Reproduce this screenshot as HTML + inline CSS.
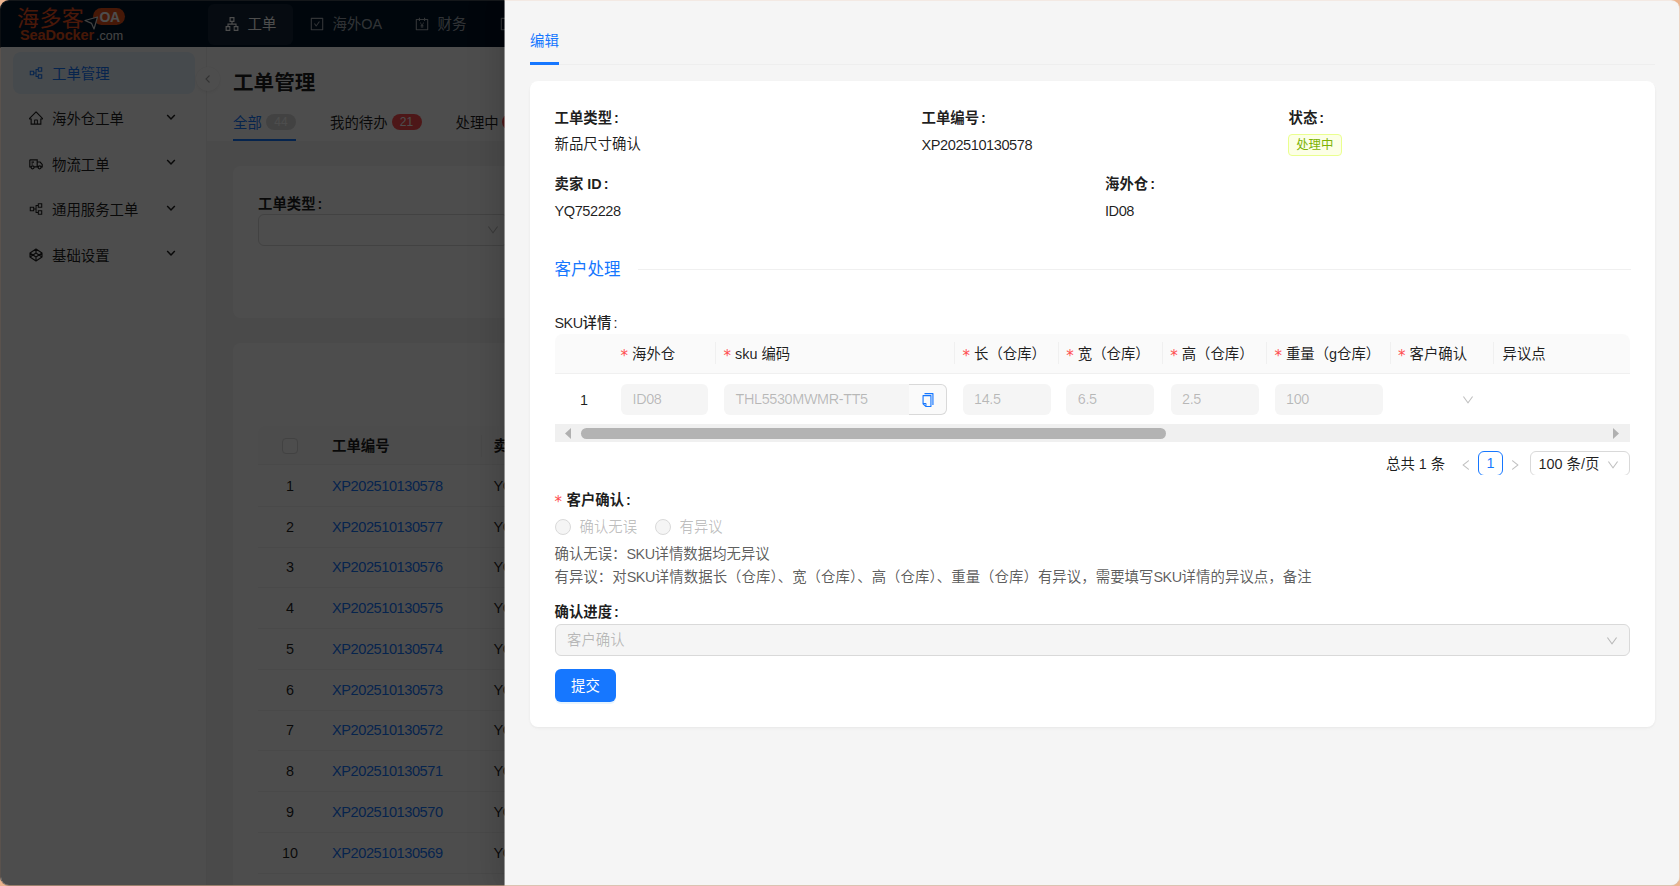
<!DOCTYPE html>
<html lang="zh-CN">
<head>
<meta charset="utf-8">
<title>工单管理</title>
<style>
*{box-sizing:border-box;margin:0;padding:0}
html,body{width:1680px;height:886px;overflow:hidden}
body{background:#ebb48f;font-family:"Liberation Sans","Noto Sans CJK SC",sans-serif;font-size:14.4px;color:rgba(0,0,0,.88);position:relative}
.l{font-size:14.6px;letter-spacing:-.45px}
.a{position:absolute}
.t{position:absolute;white-space:nowrap;line-height:22px;height:22px}
.b{font-weight:700}
svg{display:block}
/* window frame */
#edge{position:absolute;left:0;top:0;width:1680px;height:886px;border-radius:9px;
 background:
 linear-gradient(90deg,#14171a 0,#14171a 504px,#f3e9e3 505px,#f3e9e3 100%) 0 0/100% 5px no-repeat,
 linear-gradient(90deg,#9b806c 0,#9b806c 504px,#dcc3b1 505px,#dcc3b1 100%) 0 100%/100% 5px no-repeat,
 linear-gradient(180deg,#0c0f12 0,#0c0f12 47px,#5a524d 48px,#5a524d 100%) 0 0/5px 100% no-repeat,
 #ecd3c2}
#win{position:absolute;left:1px;top:1px;width:1678px;height:884px;border-radius:8px;overflow:hidden;background:linear-gradient(90deg,#4d4d4d 0,#4d4d4d 504px,#f5f5f5 505px,#f5f5f5 100%)}
#stage{position:absolute;left:-1px;top:-1px;width:1680px;height:886px}
/* ---------- underlay app ---------- */
#hdr{left:1px;top:1px;width:1678px;height:46px;background:#001529}
#sider{left:1px;top:47px;width:206px;height:839px;background:#fff;border-right:1px solid rgba(5,5,5,.06)}
#main{left:207px;top:47px;width:1473px;height:839px;background:#f5f5f5}
#phead{left:207px;top:47px;width:1473px;height:94px;background:#fff}
.nav{position:absolute;top:3px;height:41px;border-radius:6px;color:rgba(255,255,255,.65)}
.nav.on{background:rgba(255,255,255,.08);color:#fff}
.nav svg{position:absolute;left:16.500px;top:13px;width:14px;height:14px;fill:currentColor}
.nav span{position:absolute;left:39.500px;top:9px;line-height:22px;white-space:nowrap}
.mi{position:absolute;left:13px;width:182px;height:41.6px;border-radius:8px;color:rgba(0,0,0,.88)}
.mi.on{background:#e6f4ff;color:#1677ff}
.mi svg.ic{position:absolute;left:16px;top:13.5px;width:14px;height:14px;fill:currentColor}
.mi span{position:absolute;left:39px;top:10.5px;line-height:22px;white-space:nowrap}
.mi svg.ar{position:absolute;left:152.5px;top:14px;width:10px;height:10px;fill:none;stroke:currentColor;stroke-width:1.5}
.card{position:absolute;background:#fff;border-radius:8px}
.bdg{position:absolute;height:16px;border-radius:8px;color:#fff;font-size:12px;line-height:16px;text-align:center;width:30px}
.th{position:absolute;background:#fafafa}
.row{position:absolute;left:258px;width:260px;height:40.75px;border-bottom:1px solid #f0f0f0}
.row i{position:absolute;left:0;width:64px;text-align:center;font-style:normal;line-height:22px;top:8.7px}
.row u{font-size:14.6px;letter-spacing:-.45px;position:absolute;left:74px;text-decoration:none;color:#1677ff;line-height:22px;top:8.7px}
.row b{font-size:14.6px;letter-spacing:-.45px;position:absolute;left:235.5px;font-weight:400;line-height:22px;top:8.7px}
#mask{left:1px;top:1px;width:1678px;height:884px;background:rgba(0,0,0,.6975)}
/* ---------- drawer ---------- */
#drawer{left:505px;top:1px;width:1175px;height:884px;background:#f5f5f5;box-shadow:-6px 0 16px 0 rgba(0,0,0,.08),-3px 0 6px -4px rgba(0,0,0,.12),-9px 0 28px 8px rgba(0,0,0,.05)}

.lb{position:absolute;white-space:nowrap;line-height:22px;height:22px;font-weight:700;color:rgba(0,0,0,.88)}
.lb:after{content:":";margin-left:2px;font-weight:700}
.v{position:absolute;white-space:nowrap;line-height:22px;height:22px;color:rgba(0,0,0,.88)}
.hc{position:absolute;top:342.500px;white-space:nowrap;line-height:22px;height:22px;color:rgba(0,0,0,.88)}
.hc em{font-style:normal;color:#ff4d4f;font-family:"DejaVu Sans","Liberation Sans",sans-serif;font-size:15px;margin-right:4px;display:inline-block;width:7.5px;position:relative;top:2px}
.sep{position:absolute;top:342px;width:1px;height:22px;background:#f0f0f0}
.inp{font-size:14.4px;letter-spacing:-.35px;position:absolute;top:384px;height:31px;border-radius:6px;background:#f5f5f5;color:rgba(0,0,0,.25);line-height:31px;padding-left:11.500px;white-space:nowrap}
.dis{color:rgba(0,0,0,.25)}
</style>
</head>
<body>
<div id="edge"></div>
<div id="win"><div id="stage">

<!-- ================= underlay ================= -->
<div id="under" class="a" style="left:0;top:0;width:505px;height:886px;overflow:hidden">
<div id="hdr" class="a">
  <!-- logo -->
  <div class="a" id="logo" style="left:18px;top:6px;width:108px;height:36px">
    <div class="t" style="left:-2px;top:-1.500px;font-size:22px;line-height:26px;height:26px;color:#f4511e;letter-spacing:.4px">海多客</div>
    <div class="a" style="left:74px;top:1px;width:32px;height:17px;border-radius:9px;background:#e8501a"></div>
    <div class="t b" style="left:80.500px;top:.5px;font-size:14px;line-height:18px;color:#fff;letter-spacing:-.5px">OA</div>
    <svg class="a" style="left:65px;top:9px" width="15" height="14" viewBox="0 0 15 14"><path d="M1 4.5 13.5 1 10 13 7.6 7.4Z" fill="#001529" stroke="#d9d9d9" stroke-width="1.2" stroke-linejoin="round"/></svg>
    <div class="t b" style="left:1px;top:20px;font-size:14.5px;line-height:16px;height:16px;color:#e8501a;letter-spacing:-.1px">SeaDocker</div>
    <div class="t" style="left:77px;top:21px;font-size:12.5px;line-height:16px;height:16px;color:#e0e0e0">.com</div>
  </div>
  <!-- nav -->
  <div class="nav on" style="left:207px;width:85px"><svg viewBox="64 64 896 896"><path d="M908 640H804V488c0-4.400-3.600-8-8-8H548v-96h108c8.800 0 16-7.200 16-16V80c0-8.800-7.200-16-16-16H368c-8.800 0-16 7.200-16 16v288c0 8.800 7.200 16 16 16h108v96H228c-4.400 0-8 3.600-8 8v152H116c-8.800 0-16 7.200-16 16v288c0 8.800 7.200 16 16 16h272c8.800 0 16-7.200 16-16V656c0-8.800-7.200-16-16-16H292v-88h440v88H636c-8.800 0-16 7.200-16 16v288c0 8.800 7.200 16 16 16h272c8.800 0 16-7.200 16-16V656c0-8.800-7.200-16-16-16zm-564 76v168H176V716h168zm84-408V140h168v168H428zm420 576H680V716h168v168z"/></svg><span>工单</span></div>
  <div class="nav" style="left:292px;width:105px"><svg viewBox="64 64 896 896"><path d="M433.100 657.700a31.800 31.800 0 0051.700 0l210.600-292c3.800-5.300 0-12.700-6.500-12.700H642c-10.200 0-19.900 4.900-25.900 13.300L459 584.300l-71.200-98.800c-6-8.300-15.600-13.300-25.900-13.300H315c-6.500 0-10.300 7.400-6.500 12.700l124.600 172.800z"/><path d="M880 112H144c-17.700 0-32 14.300-32 32v736c0 17.700 14.300 32 32 32h736c17.700 0 32-14.300 32-32V144c0-17.700-14.300-32-32-32zm-40 728H184V184h656v656z"/></svg><span>海外OA</span></div>
  <div class="nav" style="left:397px;width:85px"><svg viewBox="64 64 896 896"><path d="M880 184H712v-64c0-4.400-3.600-8-8-8h-56c-4.400 0-8 3.600-8 8v64H384v-64c0-4.400-3.600-8-8-8h-56c-4.400 0-8 3.600-8 8v64H144c-17.700 0-32 14.300-32 32v664c0 17.700 14.300 32 32 32h736c17.700 0 32-14.300 32-32V216c0-17.700-14.300-32-32-32zm-40 656H184V256h128v48c0 4.400 3.600 8 8 8h56c4.400 0 8-3.600 8-8v-48h256v48c0 4.400 3.600 8 8 8h56c4.400 0 8-3.600 8-8v-48h128v584z"/><path d="M640 420h-50l-78 150-78-150h-52l95 170h-55v44h70v36h-70v44h70v60h44v-60h70v-44h-70v-36h70v-44h-55z"/></svg><span>财务</span></div>
  <div class="nav" style="left:482px;width:85px"><svg viewBox="64 64 896 896"><path d="M880 112H144c-17.700 0-32 14.300-32 32v736c0 17.700 14.300 32 32 32h736c17.700 0 32-14.300 32-32V144c0-17.700-14.300-32-32-32zm-40 728H184V184h656v656z"/></svg><span>基础</span></div>
</div>

<div id="sider" class="a"></div>
<div id="main" class="a"></div>
<div id="phead" class="a"></div>
<div class="mi on" style="top:52px"><svg class="ic" viewBox="64 64 896 896"><path d="M640.600 429.800h257.100c7.900 0 14.300-6.400 14.300-14.300V158.300c0-7.900-6.400-14.300-14.300-14.300H640.600c-7.900 0-14.300 6.400-14.300 14.300v92.900H490.600c-3.900 0-7.100 3.200-7.100 7.100v221.500h-85.700v-96.500c0-7.900-6.400-14.300-14.300-14.300H126.300c-7.900 0-14.300 6.400-14.300 14.300v257.200c0 7.900 6.400 14.300 14.300 14.300h257.100c7.900 0 14.300-6.400 14.300-14.300V544h85.700v221.500c0 3.900 3.200 7.100 7.100 7.100h135.700v92.900c0 7.900 6.400 14.300 14.300 14.300h257.100c7.900 0 14.300-6.400 14.300-14.300v-257.200c0-7.900-6.400-14.300-14.300-14.300h-257c-7.900 0-14.300 6.400-14.300 14.300v100h-78.600v-393h78.600v100c0 7.900 6.400 14.300 14.300 14.300zm53.500-217.900h150V362h-150V211.900zM329.900 587h-150V437h150v150zm364.200 75.100h150v150.100h-150V662.100z"/></svg><span>工单管理</span></div>
<div class="mi" style="top:97.6px"><svg class="ic" viewBox="64 64 896 896"><path d="M946.500 505L560.100 118.800l-25.900-25.900a31.500 31.500 0 00-44.400 0L77.500 505a63.900 63.900 0 00-18.800 46c.4 35.200 29.700 63.300 64.900 63.300h42.500V940h691.800V614.300h43.400c17.100 0 33.200-6.700 45.300-18.800a63.600 63.600 0 0018.700-45.300c0-17-6.700-33.100-18.800-45.200zM568 868H456V664h112v204zm217.900-325.700V868H632V640c0-22.100-17.900-40-40-40H432c-22.100 0-40 17.900-40 40v228H238.100V542.300h-96l370-369.700 23.100 23.100L882 542.300h-96.100z"/></svg><span>海外仓工单</span><svg class="ar" viewBox="0 0 10 10"><path d="M1.200 3 5 7l3.800-4"/></svg></div>
<div class="mi" style="top:143.2px"><svg class="ic" viewBox="0 0 14 14" style="fill:none;stroke:currentColor;stroke-width:1.200"><path d="M.8 2.800h7.400v7H5.200M.8 2.800v7h1.100M8.200 5h2.900l2.100 2.400v2.400h-1.300M8.200 9.800h1.300"/><circle cx="3.600" cy="10.300" r="1.500"/><circle cx="10.600" cy="10.300" r="1.500"/><path d="M2.500 5.200h2.500M2.500 7h1.500"/></svg><span>物流工单</span><svg class="ar" viewBox="0 0 10 10"><path d="M1.200 3 5 7l3.800-4"/></svg></div>
<div class="mi" style="top:188.8px"><svg class="ic" viewBox="64 64 896 896"><path d="M640.600 429.800h257.100c7.900 0 14.300-6.400 14.300-14.300V158.300c0-7.900-6.400-14.300-14.300-14.300H640.600c-7.900 0-14.300 6.400-14.300 14.300v92.900H490.600c-3.900 0-7.100 3.200-7.100 7.100v221.500h-85.700v-96.500c0-7.900-6.400-14.300-14.300-14.300H126.300c-7.900 0-14.300 6.400-14.300 14.300v257.200c0 7.900 6.400 14.300 14.300 14.300h257.100c7.900 0 14.300-6.400 14.300-14.300V544h85.700v221.500c0 3.900 3.200 7.100 7.100 7.100h135.700v92.900c0 7.900 6.400 14.300 14.300 14.300h257.100c7.900 0 14.300-6.400 14.300-14.300v-257.200c0-7.900-6.400-14.300-14.300-14.300h-257c-7.900 0-14.300 6.400-14.300 14.300v100h-78.600v-393h78.600v100c0 7.900 6.400 14.300 14.300 14.300zm53.500-217.900h150V362h-150V211.900zM329.900 587h-150V437h150v150zm364.200 75.100h150v150.100h-150V662.100z"/></svg><span>通用服务工单</span><svg class="ar" viewBox="0 0 10 10"><path d="M1.200 3 5 7l3.800-4"/></svg></div>
<div class="mi" style="top:234.4px"><svg class="ic" viewBox="0 0 14 14" style="fill:none;stroke:currentColor;stroke-width:1.150;stroke-linejoin:round"><path d="M7 1 13 5v4l-6 4-6-4V5zM7 1v4M7 13V9M1 5l6 4 6-4M1 9l6-4 6 4"/></svg><span>基础设置</span><svg class="ar" viewBox="0 0 10 10"><path d="M1.200 3 5 7l3.800-4"/></svg></div>
<div class="a" style="left:196px;top:67px;width:24px;height:24px;border-radius:12px;background:#fff;box-shadow:0 2px 8px -2px rgba(0,0,0,.05),0 1px 4px -1px rgba(25,15,15,.07),0 0 1px 0 rgba(0,0,0,.08)"><svg style="position:absolute;left:7px;top:7px" width="10" height="10" viewBox="0 0 10 10"><path d="M6.500 1.500 3 5l3.500 3.500" fill="none" stroke="rgba(0,0,0,.35)" stroke-width="1.100"/></svg></div>

<div class="t b" style="left:233px;top:67px;font-size:20.6px;line-height:32px;height:32px">工单管理</div>
<div class="t" style="left:233px;top:111.500px;color:#1677ff">全部</div>
<div class="bdg" style="left:266px;top:114px;background:rgba(0,0,0,.15)">44</div>
<div class="a" style="left:233px;top:139px;width:63px;height:2px;background:#1677ff"></div>
<div class="t" style="left:330px;top:111.500px">我的待办</div>
<div class="bdg" style="left:391.500px;top:114px;background:#ff4d4f">21</div>
<div class="t" style="left:455.500px;top:111.500px">处理中</div>
<div class="bdg" style="left:502px;top:114px;background:#ff4d4f">21</div>
<div class="card" style="left:233px;top:166px;width:1430px;height:152px"></div>
<div class="t b" style="left:258px;top:192.500px">工单类型<span style="margin:0 8px 0 2px">:</span></div>
<div class="a" style="left:258px;top:214px;width:250px;height:32px;border:1px solid #d9d9d9;border-radius:6px;background:#fff"></div>
<svg class="a" style="left:487px;top:224px" width="12" height="12" viewBox="64 64 896 896" fill="rgba(0,0,0,.25)"><path d="M884 256h-75c-5.100 0-9.900 2.500-12.900 6.600L512 654.200 227.900 262.600c-3-4.100-7.800-6.600-12.900-6.600h-75c-6.500 0-10.300 7.400-6.500 12.700l352.600 486.100c12.800 17.600 39 17.600 51.700 0l352.600-486.100c3.900-5.300.1-12.700-6.400-12.700z"/></svg>
<div class="card" style="left:233px;top:342.500px;width:1430px;height:560px"></div>
<div class="th" style="left:258px;top:426px;width:260px;height:39px;border-radius:8px 0 0 0;border-bottom:1px solid #f0f0f0"></div>
<div class="a" style="left:282px;top:437.500px;width:16px;height:16px;border:1px solid #d9d9d9;border-radius:4px;background:#fff"></div>
<div class="t b" style="left:332px;top:434.500px">工单编号</div>
<div class="a" style="left:481px;top:435px;width:1px;height:22px;background:#f0f0f0"></div>
<div class="t b" style="left:493.500px;top:434.500px">卖家 ID</div>
<div class="row" style="top:466.10px"><i>1</i><u>XP202510130578</u><b>YQ752228</b></div>
<div class="row" style="top:506.85px"><i>2</i><u>XP202510130577</u><b>YQ752228</b></div>
<div class="row" style="top:547.60px"><i>3</i><u>XP202510130576</u><b>YQ752228</b></div>
<div class="row" style="top:588.35px"><i>4</i><u>XP202510130575</u><b>YQ752228</b></div>
<div class="row" style="top:629.10px"><i>5</i><u>XP202510130574</u><b>YQ752228</b></div>
<div class="row" style="top:669.85px"><i>6</i><u>XP202510130573</u><b>YQ752228</b></div>
<div class="row" style="top:710.60px"><i>7</i><u>XP202510130572</u><b>YQ752228</b></div>
<div class="row" style="top:751.35px"><i>8</i><u>XP202510130571</u><b>YQ752228</b></div>
<div class="row" style="top:792.10px"><i>9</i><u>XP202510130570</u><b>YQ752228</b></div>
<div class="row" style="top:832.85px"><i>10</i><u>XP202510130569</u><b>YQ752228</b></div>
<div id="mask" class="a"></div>
</div>
<div id="drawer" class="a"></div>
<div class="a" style="left:504px;top:1px;width:1px;height:884px;background:rgba(245,245,245,.45)"></div>

<!-- ================= drawer content ================= -->
<div class="t" style="left:530px;top:29.500px;color:#1677ff">编辑</div>
<div class="a" style="left:529.500px;top:64px;width:1125.500px;height:1px;background:#eeeeee"></div>
<div class="a" style="left:530px;top:62px;width:28.500px;height:2.500px;background:#1677ff"></div>
<div class="card" style="left:529.500px;top:81px;width:1125.500px;height:646px;box-shadow:0 1px 2px 0 rgba(0,0,0,.03),0 1px 6px -1px rgba(0,0,0,.02),0 2px 4px 0 rgba(0,0,0,.02)"></div>

<div class="lb" style="left:554.500px;top:107px">工单类型</div>
<div class="v" style="left:554.500px;top:133px">新品尺寸确认</div>
<div class="lb" style="left:921.500px;top:107px">工单编号</div>
<div class="v l" style="left:921.500px;top:134px">XP202510130578</div>
<div class="lb" style="left:1288.500px;top:107px">状态</div>
<div class="a" style="left:1288px;top:134px;width:53.500px;height:22px;border:1px solid #eaff8f;border-radius:4px;background:#fcffe6;color:#7cb305;font-size:12.4px;line-height:20px;text-align:center">处理中</div>
<div class="lb" style="left:554.500px;top:173px">卖家 ID</div>
<div class="v l" style="left:554.500px;top:199.500px">YQ752228</div>
<div class="lb" style="left:1105px;top:173px">海外仓</div>
<div class="v l" style="left:1105px;top:200px">ID08</div>

<div class="t" style="left:554.500px;top:256.500px;font-size:16.5px;line-height:24px;height:24px;color:#1677ff">客户处理</div>
<div class="a" style="left:637.500px;top:269px;width:993px;height:1px;background:#f0f0f0"></div>

<div class="t" style="left:554.500px;top:312px;font-weight:500"><span style="letter-spacing:-.5px">SKU</span>详情<span style="margin-left:2px">:</span></div>

<!-- table -->
<div class="a" style="left:555px;top:334px;width:1075px;height:40px;background:#fafafa;border-radius:8px 8px 0 0;border-bottom:1px solid #f0f0f0"></div>
<div class="hc" style="left:620.500px"><em>*</em>海外仓</div>
<div class="hc" style="left:723.500px"><em>*</em>sku 编码</div>
<div class="hc" style="left:962.500px"><em>*</em>长（仓库）</div>
<div class="hc" style="left:1066.300px"><em>*</em>宽（仓库）</div>
<div class="hc" style="left:1170.200px"><em>*</em>高（仓库）</div>
<div class="hc" style="left:1274.400px"><em>*</em>重量（g仓库）</div>
<div class="hc" style="left:1398px"><em>*</em>客户确认</div>
<div class="hc" style="left:1502.500px">异议点</div>
<div class="sep" style="left:715px"></div><div class="sep" style="left:954px"></div><div class="sep" style="left:1058px"></div><div class="sep" style="left:1162px"></div><div class="sep" style="left:1266px"></div><div class="sep" style="left:1390px"></div><div class="sep" style="left:1493px"></div>
<div class="t" style="left:555px;top:388.500px;width:58px;text-align:center">1</div>
<div class="inp" style="left:621px;width:87px">ID08</div>
<div class="inp" style="left:724px;width:185px;border-radius:6px 0 0 6px">THL5530MWMR-TT5</div>
<div class="a" style="left:909px;top:384px;width:38px;height:31px;border:1px solid #d9d9d9;border-left:0;border-radius:0 6px 6px 0;background:#fafafa"></div>
<svg class="a" style="left:920.500px;top:392.500px" width="14" height="14" viewBox="64 64 896 896" fill="#1677ff"><path d="M832 64H296c-4.400 0-8 3.600-8 8v56c0 4.400 3.600 8 8 8h496v688c0 4.400 3.600 8 8 8h56c4.400 0 8-3.600 8-8V96c0-17.700-14.300-32-32-32zM704 192H192c-17.700 0-32 14.300-32 32v530.700c0 8.500 3.400 16.600 9.400 22.600l173.300 173.300c2.200 2.200 4.700 4 7.400 5.500v1.900h4.200c3.500 1.300 7.200 2 11 2H704c17.700 0 32-14.300 32-32V224c0-17.700-14.300-32-32-32zM350 856.200L263.900 770H350v86.200zM664 888H414V746c0-22.100-17.900-40-40-40H232V264h432v624z"/></svg>
<div class="inp" style="left:962.500px;width:88px">14.5</div>
<div class="inp" style="left:1066.300px;width:88px">6.5</div>
<div class="inp" style="left:1170.500px;width:88px">2.5</div>
<div class="inp" style="left:1274.500px;width:108px">100</div>
<svg class="a" style="left:1462px;top:393.500px" width="12" height="12" viewBox="64 64 896 896" fill="rgba(0,0,0,.25)"><path d="M884 256h-75c-5.100 0-9.900 2.500-12.900 6.600L512 654.200 227.900 262.600c-3-4.100-7.800-6.600-12.900-6.600h-75c-6.500 0-10.300 7.400-6.500 12.700l352.600 486.100c12.800 17.600 39 17.600 51.700 0l352.600-486.100c3.900-5.300.1-12.700-6.400-12.700z"/></svg>
<!-- scrollbar -->
<div class="a" style="left:555px;top:424px;width:1075px;height:18px;background:#f0f0f0"></div>
<div class="a" style="left:581px;top:428px;width:585px;height:11px;border-radius:6px;background:#b3b3b3"></div>
<svg class="a" style="left:564px;top:427px" width="8" height="13" viewBox="0 0 8 13"><path d="M1 6.500 7 1v11z" fill="#b0b0b0"/></svg>
<svg class="a" style="left:1612px;top:427px" width="8" height="13" viewBox="0 0 8 13"><path d="M7 6.500 1 1v11z" fill="#b0b0b0"/></svg>
<!-- pagination (clipped) -->
<div class="a" style="left:1370px;top:445px;width:262px;height:29.500px;overflow:hidden">
  <div class="t" style="left:16px;top:8px;line-height:22px">总共 1 条</div>
  <svg class="a" style="left:90px;top:13.500px" width="12" height="12" viewBox="64 64 896 896" fill="rgba(0,0,0,.25)"><path d="M724 218.300V141c0-6.700-7.700-10.400-12.900-6.300L260.300 486.800a31.860 31.860 0 000 50.300l450.800 352.100c5.300 4.100 12.900.4 12.900-6.300v-77.300c0-4.900-2.300-9.600-6.100-12.600l-360-281 360-281.100c3.800-3 6.100-7.700 6.100-12.600z"/></svg>
  <div class="a" style="left:108px;top:6px;width:25px;height:25px;border:1px solid #1677ff;border-radius:6px;background:#fff;color:#1677ff;text-align:center;line-height:22px">1</div>
  <svg class="a" style="left:139px;top:13.500px" width="12" height="12" viewBox="64 64 896 896" fill="rgba(0,0,0,.25)"><path d="M765.700 486.800L314.900 134.700A7.970 7.970 0 00302 141v77.300c0 4.900 2.300 9.600 6.100 12.600l360 281.100-360 281.100c-3.900 3-6.100 7.700-6.100 12.600V883c0 6.700 7.700 10.400 12.900 6.300l450.800-352.100a31.960 31.960 0 000-50.400z"/></svg>
  <div class="a" style="left:160px;top:6px;width:100px;height:25px;border:1px solid #d9d9d9;border-radius:6px;background:#fff"></div>
  <div class="t" style="left:168.500px;top:8px">100 条/页</div>
  <svg class="a" style="left:236.500px;top:13.500px" width="12" height="12" viewBox="64 64 896 896" fill="rgba(0,0,0,.25)"><path d="M884 256h-75c-5.100 0-9.900 2.500-12.900 6.600L512 654.200 227.900 262.600c-3-4.100-7.800-6.600-12.900-6.600h-75c-6.500 0-10.300 7.400-6.500 12.700l352.600 486.100c12.800 17.600 39 17.600 51.700 0l352.600-486.100c3.900-5.300.1-12.700-6.400-12.700z"/></svg>
</div>

<!-- confirm -->
<div class="t" style="left:554.500px;top:491px;color:#ff4d4f;font-size:15px;font-family:'DejaVu Sans','Liberation Sans',sans-serif">*</div>
<div class="lb" style="left:566.500px;top:488.500px">客户确认</div>
<div class="a" style="left:555px;top:518.500px;width:16px;height:16px;border-radius:8px;border:1px solid #d9d9d9;background:#f5f5f5"></div>
<div class="t dis" style="left:579.500px;top:515.500px">确认无误</div>
<div class="a" style="left:654.500px;top:518.500px;width:16px;height:16px;border-radius:8px;border:1px solid #d9d9d9;background:#f5f5f5"></div>
<div class="t dis" style="left:679.500px;top:515.500px">有异议</div>
<div class="t" style="left:554.500px;top:543px;color:rgba(0,0,0,.65)">确认无误：<span style="letter-spacing:-.5px">SKU</span>详情数据均无异议</div>
<div class="t" style="left:554.500px;top:566px;color:rgba(0,0,0,.65);letter-spacing:.06px">有异议：对<span style="letter-spacing:-.5px">SKU</span>详情数据长（仓库）、宽（仓库）、高（仓库）、重量（仓库）有异议，需要填写<span style="letter-spacing:-.5px">SKU</span>详情的异议点，备注</div>
<div class="lb" style="left:554.500px;top:601px">确认进度</div>
<div class="a" style="left:555px;top:624px;width:1075px;height:32px;border:1px solid #d9d9d9;border-radius:6px;background:#f5f5f5"></div>
<div class="t dis" style="left:567px;top:629px">客户确认</div>
<svg class="a" style="left:1606px;top:634.500px" width="12" height="12" viewBox="64 64 896 896" fill="rgba(0,0,0,.25)"><path d="M884 256h-75c-5.100 0-9.900 2.500-12.900 6.600L512 654.200 227.900 262.600c-3-4.100-7.800-6.600-12.900-6.600h-75c-6.500 0-10.300 7.400-6.500 12.700l352.600 486.100c12.800 17.600 39 17.600 51.700 0l352.600-486.100c3.900-5.300.1-12.700-6.400-12.700z"/></svg>
<div class="a" style="left:555px;top:669px;width:61px;height:32.500px;border-radius:6px;background:#1677ff;box-shadow:0 2px 0 rgba(5,145,255,.1);color:#fff;text-align:center;line-height:34px">提交</div>

</div></div>
</body>
</html>
